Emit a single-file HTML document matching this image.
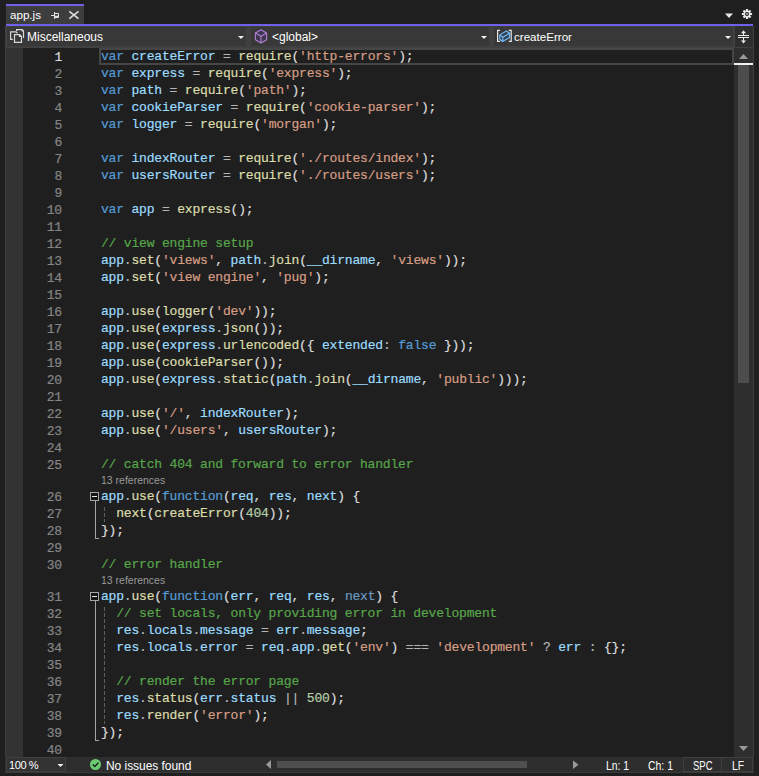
<!DOCTYPE html>
<html><head><meta charset="utf-8">
<style>
*{margin:0;padding:0;box-sizing:border-box}
html,body{width:759px;height:776px;overflow:hidden;background:#1f1f1f}
body{position:relative;font-family:"Liberation Sans",sans-serif;font-size:12px;color:#f0f0f0}
.a{position:absolute}
svg{position:absolute;overflow:visible}
#tab{left:6px;top:4px;width:78px;height:20px;background:#3d3d3d;border-top:2px solid #7160e8}
#tabline{left:6px;top:24px;width:747px;height:2px;background:#7160e8}
#nav{left:5px;top:26px;width:749px;height:22px;background:#404040}
.dd{top:27px;height:19px;background:#383838}
.navt{position:absolute;top:29px;font-size:12px;line-height:16px;color:#ffffff;white-space:pre}
#margin{left:5px;top:48px;width:18px;height:709px;background:#333333;border-left:1px solid #3d3d3d}
#curline{left:99px;top:48px;width:635px;height:17px;border:2px solid #464646}
.ln{position:absolute;left:22px;width:40px;margin-top:1px;-webkit-text-stroke:0.2px currentColor;text-align:right;font-family:"Liberation Mono",monospace;font-size:13px;letter-spacing:-0.184px;line-height:17px;color:#858585;white-space:pre}
.ln.cur{color:#dadada}
.cl{position:absolute;left:101px;-webkit-text-stroke:0.2px currentColor;font-family:"Liberation Mono",monospace;font-size:13px;letter-spacing:-0.184px;line-height:17px;color:#dcdcdc;white-space:pre}
.lens{position:absolute;left:101px;font-size:10.5px;line-height:15px;color:#999999;white-space:pre}
.k{color:#569cd6}.v{color:#9cdcfe}.f{color:#dcdcaa}.s{color:#d69d85}.c{color:#57a64a}.n{color:#b5cea8}.o{color:#b4b4b4}.u{color:#6b9bc3}
#vscroll{left:734px;top:48px;width:20px;height:709px;background:#2e2e2e;border-right:1px solid #3e3e3e}
#vthumb{left:738px;top:65px;width:11px;height:318px;background:#4d4d4d}
#vcaret{left:734px;top:63px;width:19px;height:2px;background:#f0f0f0}
#status{left:5px;top:757px;width:749px;height:16px;background:#2e2e2e;border-bottom:1px solid #3a3a3a}
.sbox{position:absolute;top:757px;height:15px;border:1px solid #3f3f3f;background:#2e2e2e}
.st{position:absolute;top:759px;font-size:12px;line-height:14px;color:#ffffff;white-space:pre}
#editwrap{left:0;top:48px;width:734px;height:709px;overflow:hidden}
</style></head><body>
<!-- tab -->
<div class="a" id="tab"></div>
<div class="st" style="left:10px;top:7px;line-height:16px;font-size:11.6px">app.js</div>
<svg width="759" height="30" style="left:0;top:0">
 <g stroke="#e0e0e0" fill="none" stroke-width="1">
  <path d="M51 15.5H54.5M54.5 12V19M54.5 13.5H58.5V17.5H54.5"/>
  <path d="M55 16.5H58" stroke-width="1.5"/>
  <path d="M69.3 11.3L78.5 18.7M78.5 11.3L69.3 18.7" stroke-width="1.5"/>
 </g>
 <path d="M725 13.5H733L729 18Z" fill="#e8e8e8"/>
 <g transform="translate(747,14)">
  <path fill="#e8e8e8" fill-rule="evenodd" d="M-1.06 -3.44 L-1.03 -5.10 L1.03 -5.10 L1.06 -3.44 L1.68 -3.18 L2.87 -4.33 L4.33 -2.87 L3.18 -1.68 L3.44 -1.06 L5.10 -1.03 L5.10 1.03 L3.44 1.06 L3.18 1.68 L4.33 2.87 L2.87 4.33 L1.68 3.18 L1.06 3.44 L1.03 5.10 L-1.03 5.10 L-1.06 3.44 L-1.68 3.18 L-2.87 4.33 L-4.33 2.87 L-3.18 1.68 L-3.44 1.06 L-5.10 1.03 L-5.10 -1.03 L-3.44 -1.06 L-3.18 -1.68 L-4.33 -2.87 L-2.87 -4.33 L-1.68 -3.18Z M0 -2A2 2 0 1 0 0 2A2 2 0 1 0 0 -2Z"/>
  <circle r="1" fill="#bdbdbd"/>
 </g>
</svg>
<div class="a" id="tabline"></div>
<!-- nav bar -->
<div class="a" id="nav"></div>
<div class="a dd" style="left:7px;width:239px"></div>
<div class="a dd" style="left:251px;width:238px"></div>
<div class="a dd" style="left:494px;width:239px"></div>
<div class="a" style="left:735px;top:26px;width:18px;height:21px;background:#2e2e2e"></div>
<div class="navt" style="left:27px">Miscellaneous</div>
<div class="navt" style="left:272px">&lt;global&gt;</div>
<div class="navt" style="left:514px;font-size:11.6px">createError</div>
<svg width="759" height="50" style="left:0;top:0">
 <g fill="#f0f0f0">
  <path d="M238 36H244L241 39Z"/>
  <path d="M481 36H487L484 39Z"/>
  <path d="M725 36H731L728 39Z"/>
 </g>
 <g fill="none" stroke="#d8d8d8" stroke-width="1.2">
  <path d="M12.8 39.4H10.6V31.8H15.8L17.6 33.2"/>
  <path d="M16.6 31.2V29.6H22.2L23.5 31V37.9"/>
  <path d="M14.5 42.4V34.7H19.6L21.5 36.6V42.4Z"/>
 </g>
 <path d="M21.6 29.1L24.1 31.6H21.6Z M19 34.1L22 37.1H19Z" fill="#d8d8d8"/>
 <g fill="#3f3650" stroke="#b180d7" stroke-width="1.1" stroke-linejoin="round">
  <path d="M261 29.8L266.6 33V39.8L261 43L255.4 39.8V33Z"/>
  <path d="M255.4 33L261 36.2L266.6 33M261 36.2V43" fill="none"/>
 </g>
 <g fill="none" stroke="#e8e8e8" stroke-width="1.2">
  <path d="M500 30.4H497.6V41.4H500"/>
  <path d="M508.8 30.4H511.2V41.4H508.8"/>
 </g>
 <g fill="#34404e" stroke="#75beff" stroke-width="1.1" stroke-linejoin="round">
  <path d="M499.8 34.9L506.4 31L509.6 33.2V37.6L502.6 41.5L499.8 39.2Z"/>
  <path d="M499.8 34.9L502.8 37.3L509.6 33.2M502.8 37.3V41.5" fill="none"/>
 </g>
 <g fill="#ececec" shape-rendering="crispEdges">
  <rect x="738" y="35" width="11" height="1"/><rect x="738" y="37" width="11" height="1"/>
  <rect x="743" y="32" width="1" height="3"/><rect x="743" y="38" width="1" height="4"/>
 </g>
 <g fill="#ececec">
  <path d="M741 33.2H746L743.5 30.2Z"/>
  <path d="M741 40.6H746L743.5 43.4Z"/>
 </g>
</svg>
<!-- editor -->
<div class="a" id="margin"></div>
<div class="a" id="curline"></div>
<div class="a" id="editwrap"><div style="position:absolute;left:0;top:-48px">
<div class="ln cur" style="top:48px">1</div>
<div class="cl" style="top:48px"><span class="k">var</span> <span class="v">createError</span><span class="o"> = </span><span class="f">require</span>(<span class="s">&#x27;http-errors&#x27;</span>);</div>
<div class="ln" style="top:65px">2</div>
<div class="cl" style="top:65px"><span class="k">var</span> <span class="v">express</span><span class="o"> = </span><span class="f">require</span>(<span class="s">&#x27;express&#x27;</span>);</div>
<div class="ln" style="top:82px">3</div>
<div class="cl" style="top:82px"><span class="k">var</span> <span class="v">path</span><span class="o"> = </span><span class="f">require</span>(<span class="s">&#x27;path&#x27;</span>);</div>
<div class="ln" style="top:99px">4</div>
<div class="cl" style="top:99px"><span class="k">var</span> <span class="v">cookieParser</span><span class="o"> = </span><span class="f">require</span>(<span class="s">&#x27;cookie-parser&#x27;</span>);</div>
<div class="ln" style="top:116px">5</div>
<div class="cl" style="top:116px"><span class="k">var</span> <span class="v">logger</span><span class="o"> = </span><span class="f">require</span>(<span class="s">&#x27;morgan&#x27;</span>);</div>
<div class="ln" style="top:133px">6</div>
<div class="cl" style="top:133px"></div>
<div class="ln" style="top:150px">7</div>
<div class="cl" style="top:150px"><span class="k">var</span> <span class="v">indexRouter</span><span class="o"> = </span><span class="f">require</span>(<span class="s">&#x27;./routes/index&#x27;</span>);</div>
<div class="ln" style="top:167px">8</div>
<div class="cl" style="top:167px"><span class="k">var</span> <span class="v">usersRouter</span><span class="o"> = </span><span class="f">require</span>(<span class="s">&#x27;./routes/users&#x27;</span>);</div>
<div class="ln" style="top:184px">9</div>
<div class="cl" style="top:184px"></div>
<div class="ln" style="top:201px">10</div>
<div class="cl" style="top:201px"><span class="k">var</span> <span class="v">app</span><span class="o"> = </span><span class="f">express</span>();</div>
<div class="ln" style="top:218px">11</div>
<div class="cl" style="top:218px"></div>
<div class="ln" style="top:235px">12</div>
<div class="cl" style="top:235px"><span class="c">// view engine setup</span></div>
<div class="ln" style="top:252px">13</div>
<div class="cl" style="top:252px"><span class="v">app</span><span class="o">.</span><span class="f">set</span>(<span class="s">&#x27;views&#x27;</span>, <span class="v">path</span><span class="o">.</span><span class="f">join</span>(<span class="v">__dirname</span>, <span class="s">&#x27;views&#x27;</span>));</div>
<div class="ln" style="top:269px">14</div>
<div class="cl" style="top:269px"><span class="v">app</span><span class="o">.</span><span class="f">set</span>(<span class="s">&#x27;view engine&#x27;</span>, <span class="s">&#x27;pug&#x27;</span>);</div>
<div class="ln" style="top:286px">15</div>
<div class="cl" style="top:286px"></div>
<div class="ln" style="top:303px">16</div>
<div class="cl" style="top:303px"><span class="v">app</span><span class="o">.</span><span class="f">use</span>(<span class="f">logger</span>(<span class="s">&#x27;dev&#x27;</span>));</div>
<div class="ln" style="top:320px">17</div>
<div class="cl" style="top:320px"><span class="v">app</span><span class="o">.</span><span class="f">use</span>(<span class="v">express</span><span class="o">.</span><span class="f">json</span>());</div>
<div class="ln" style="top:337px">18</div>
<div class="cl" style="top:337px"><span class="v">app</span><span class="o">.</span><span class="f">use</span>(<span class="v">express</span><span class="o">.</span><span class="f">urlencoded</span>({ <span class="v">extended</span><span class="o">: </span><span class="k">false</span> }));</div>
<div class="ln" style="top:354px">19</div>
<div class="cl" style="top:354px"><span class="v">app</span><span class="o">.</span><span class="f">use</span>(<span class="f">cookieParser</span>());</div>
<div class="ln" style="top:371px">20</div>
<div class="cl" style="top:371px"><span class="v">app</span><span class="o">.</span><span class="f">use</span>(<span class="v">express</span><span class="o">.</span><span class="f">static</span>(<span class="v">path</span><span class="o">.</span><span class="f">join</span>(<span class="v">__dirname</span>, <span class="s">&#x27;public&#x27;</span>)));</div>
<div class="ln" style="top:388px">21</div>
<div class="cl" style="top:388px"></div>
<div class="ln" style="top:405px">22</div>
<div class="cl" style="top:405px"><span class="v">app</span><span class="o">.</span><span class="f">use</span>(<span class="s">&#x27;/&#x27;</span>, <span class="v">indexRouter</span>);</div>
<div class="ln" style="top:422px">23</div>
<div class="cl" style="top:422px"><span class="v">app</span><span class="o">.</span><span class="f">use</span>(<span class="s">&#x27;/users&#x27;</span>, <span class="v">usersRouter</span>);</div>
<div class="ln" style="top:439px">24</div>
<div class="cl" style="top:439px"></div>
<div class="ln" style="top:456px">25</div>
<div class="cl" style="top:456px"><span class="c">// catch 404 and forward to error handler</span></div>
<div class="lens" style="top:473px">13 references</div>
<div class="ln" style="top:488px">26</div>
<div class="cl" style="top:488px"><span class="v">app</span><span class="o">.</span><span class="f">use</span>(<span class="k">function</span>(<span class="v">req</span>, <span class="v">res</span>, <span class="v">next</span>) {</div>
<div class="ln" style="top:505px">27</div>
<div class="cl" style="top:505px">  <span class="f">next</span>(<span class="f">createError</span>(<span class="n">404</span>));</div>
<div class="ln" style="top:522px">28</div>
<div class="cl" style="top:522px">});</div>
<div class="ln" style="top:539px">29</div>
<div class="cl" style="top:539px"></div>
<div class="ln" style="top:556px">30</div>
<div class="cl" style="top:556px"><span class="c">// error handler</span></div>
<div class="lens" style="top:573px">13 references</div>
<div class="ln" style="top:588px">31</div>
<div class="cl" style="top:588px"><span class="v">app</span><span class="o">.</span><span class="f">use</span>(<span class="k">function</span>(<span class="v">err</span>, <span class="v">req</span>, <span class="v">res</span>, <span class="u">next</span>) {</div>
<div class="ln" style="top:605px">32</div>
<div class="cl" style="top:605px">  <span class="c">// set locals, only providing error in development</span></div>
<div class="ln" style="top:622px">33</div>
<div class="cl" style="top:622px">  <span class="v">res</span><span class="o">.</span><span class="v">locals</span><span class="o">.</span><span class="v">message</span><span class="o"> = </span><span class="v">err</span><span class="o">.</span><span class="v">message</span>;</div>
<div class="ln" style="top:639px">34</div>
<div class="cl" style="top:639px">  <span class="v">res</span><span class="o">.</span><span class="v">locals</span><span class="o">.</span><span class="v">error</span><span class="o"> = </span><span class="v">req</span><span class="o">.</span><span class="v">app</span><span class="o">.</span><span class="f">get</span>(<span class="s">&#x27;env&#x27;</span>) <span class="o">===</span> <span class="s">&#x27;development&#x27;</span><span class="o"> ? </span><span class="v">err</span><span class="o"> : </span>{};</div>
<div class="ln" style="top:656px">35</div>
<div class="cl" style="top:656px"></div>
<div class="ln" style="top:673px">36</div>
<div class="cl" style="top:673px">  <span class="c">// render the error page</span></div>
<div class="ln" style="top:690px">37</div>
<div class="cl" style="top:690px">  <span class="v">res</span><span class="o">.</span><span class="f">status</span>(<span class="v">err</span><span class="o">.</span><span class="v">status</span><span class="o"> || </span><span class="n">500</span>);</div>
<div class="ln" style="top:707px">38</div>
<div class="cl" style="top:707px">  <span class="v">res</span><span class="o">.</span><span class="f">render</span>(<span class="s">&#x27;error&#x27;</span>);</div>
<div class="ln" style="top:724px">39</div>
<div class="cl" style="top:724px">});</div>
<div class="ln" style="top:741px">40</div>
<div class="cl" style="top:741px"></div>
<svg width="759" height="776" style="left:0;top:0" shape-rendering="crispEdges">
 <g fill="#a5a5a5">
  <path d="M90 492h9v1h-9zM90 500h9v1h-9zM90 492h1v9h-1zM98 492h1v9h-1z"/>
  <rect x="95" y="501" width="1" height="38"/><rect x="95" y="538" width="4" height="1"/>
  <path d="M90 592h9v1h-9zM90 600h9v1h-9zM90 592h1v9h-1zM98 592h1v9h-1z"/>
  <rect x="95" y="601" width="1" height="140"/><rect x="95" y="740" width="4" height="1"/>
 </g>
 <rect x="91" y="493" width="7" height="7" fill="#151515"/>
 <rect x="91" y="593" width="7" height="7" fill="#151515"/>
 <rect x="92" y="496" width="5" height="1" fill="#e6e6e6"/>
 <rect x="92" y="596" width="5" height="1" fill="#e6e6e6"/>
 <line x1="104.5" y1="507" x2="104.5" y2="522" stroke="#5f5f5f" stroke-width="1" stroke-dasharray="4 2"/>
 <line x1="104.5" y1="607" x2="104.5" y2="724" stroke="#5f5f5f" stroke-width="1" stroke-dasharray="4 2"/>
</svg>
</div></div>
<!-- vertical scrollbar -->
<div class="a" id="vscroll"></div>
<div class="a" id="vthumb"></div>
<div class="a" id="vcaret"></div>
<svg width="759" height="776" style="left:0;top:0">
 <path d="M739 59H748L743.5 54Z" fill="#9a9a9a"/>
 <path d="M739 746H748L743.5 751Z" fill="#9a9a9a"/>
</svg>
<!-- status bar -->
<div class="a" id="status"></div>
<div class="sbox" style="left:6px;width:60px;background:#333333"></div>
<div class="st" style="left:9px;top:758px;font-size:11px;letter-spacing:-0.4px">100 %</div>
<div class="st" style="left:106px;letter-spacing:-0.05px">No issues found</div>
<div class="a" style="left:277px;top:761px;width:250px;height:7px;background:#4f4f4f"></div>
<div class="st" style="left:606px;transform:scaleX(0.86);transform-origin:0 0">Ln: 1</div>
<div class="st" style="left:648px;transform:scaleX(0.87);transform-origin:0 0">Ch: 1</div>
<div class="sbox" style="left:683px;width:39px"></div>
<div class="sbox" style="left:721px;width:32px"></div>
<div class="st" style="left:693px;transform:scaleX(0.79);transform-origin:0 0">SPC</div>
<div class="st" style="left:732px;transform:scaleX(0.86);transform-origin:0 0">LF</div>
<svg width="759" height="776" style="left:0;top:0">
 <path d="M57.5 764H63.5L60.5 767Z" fill="#f0f0f0"/>
 <circle cx="95.5" cy="764.5" r="5.5" fill="#6ccb70"/>
 <path d="M92.8 764.6L94.8 766.6L98.4 762.8" fill="none" stroke="#1e1e1e" stroke-width="1.4"/>
 <path d="M271 760V769L266 764.5Z" fill="#9a9a9a"/>
 <path d="M573 760.5V769L578.5 764.75Z" fill="#9a9a9a"/>
</svg>
</body></html>
